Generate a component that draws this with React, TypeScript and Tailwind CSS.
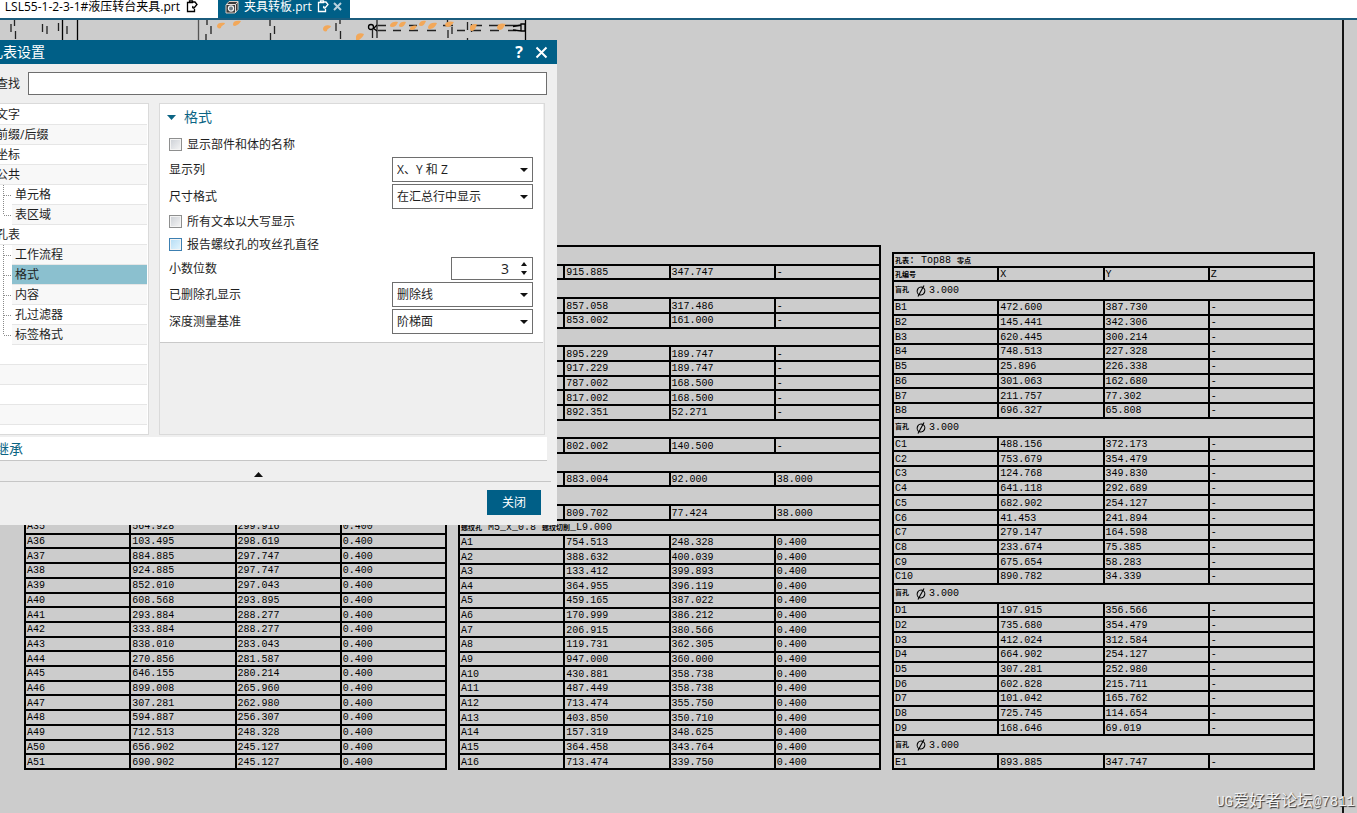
import { useState } from 'react';
import type { ReactNode } from 'react';

type TableRow = string[] | { group: ReactNode; compact?: boolean };

const NAV_ITEMS: { label: string; child?: boolean; last?: boolean }[] = [
  { label: '文字' },
  { label: '前缀/后缀' },
  { label: '坐标' },
  { label: '公共' },
  { label: '单元格', child: true },
  { label: '表区域', child: true, last: true },
  { label: '孔表' },
  { label: '工作流程', child: true },
  { label: '格式', child: true },
  { label: '内容', child: true },
  { label: '孔过滤器', child: true },
  { label: '标签格式', child: true, last: true },
];

const BLIND_3 = <BlindHole size="3.000" />;

const TABLE_LEFT: TableRow[] = [
  ['A35', '564.928', '299.916', '0.400'],
  ['A36', '103.495', '298.619', '0.400'],
  ['A37', '884.885', '297.747', '0.400'],
  ['A38', '924.885', '297.747', '0.400'],
  ['A39', '852.010', '297.043', '0.400'],
  ['A40', '608.568', '293.895', '0.400'],
  ['A41', '293.884', '288.277', '0.400'],
  ['A42', '333.884', '288.277', '0.400'],
  ['A43', '838.010', '283.043', '0.400'],
  ['A44', '270.856', '281.587', '0.400'],
  ['A45', '646.155', '280.214', '0.400'],
  ['A46', '899.008', '265.960', '0.400'],
  ['A47', '307.281', '262.980', '0.400'],
  ['A48', '594.887', '256.307', '0.400'],
  ['A49', '712.513', '248.328', '0.400'],
  ['A50', '656.902', '245.127', '0.400'],
  ['A51', '690.902', '245.127', '0.400'],
];

const TABLE_MIDDLE: TableRow[] = [
  { group: '' },
  ['', '915.885', '347.747', '-'],
  { group: '' },
  ['', '857.058', '317.486', '-'],
  ['', '853.002', '161.000', '-'],
  { group: '' },
  ['', '895.229', '189.747', '-'],
  ['', '917.229', '189.747', '-'],
  ['', '787.002', '168.500', '-'],
  ['', '817.002', '168.500', '-'],
  ['', '892.351', '52.271', '-'],
  { group: '' },
  ['', '802.002', '140.500', '-'],
  { group: '' },
  ['', '883.004', '92.000', '38.000'],
  { group: '' },
  ['', '809.702', '77.424', '38.000'],
  {
    compact: true,
    group: (
      <>
        <Han>螺纹孔</Han> M5_x_0.8 <Han>螺纹切削</Han>_L9.000
      </>
    ),
  },
  ['A1', '754.513', '248.328', '0.400'],
  ['A2', '388.632', '400.039', '0.400'],
  ['A3', '133.412', '399.893', '0.400'],
  ['A4', '364.955', '396.119', '0.400'],
  ['A5', '459.165', '387.022', '0.400'],
  ['A6', '170.999', '386.212', '0.400'],
  ['A7', '206.915', '380.566', '0.400'],
  ['A8', '119.731', '362.305', '0.400'],
  ['A9', '947.000', '360.000', '0.400'],
  ['A10', '430.881', '358.738', '0.400'],
  ['A11', '487.449', '358.738', '0.400'],
  ['A12', '713.474', '355.750', '0.400'],
  ['A13', '403.850', '350.710', '0.400'],
  ['A14', '157.319', '348.625', '0.400'],
  ['A15', '364.458', '343.764', '0.400'],
  ['A16', '713.474', '339.750', '0.400'],
];

const TABLE_RIGHT: TableRow[] = [
  { group: BLIND_3 },
  ['B1', '472.600', '387.730', '-'],
  ['B2', '145.441', '342.306', '-'],
  ['B3', '620.445', '300.214', '-'],
  ['B4', '748.513', '227.328', '-'],
  ['B5', '25.896', '226.338', '-'],
  ['B6', '301.063', '162.680', '-'],
  ['B7', '211.757', '77.302', '-'],
  ['B8', '696.327', '65.808', '-'],
  { group: BLIND_3 },
  ['C1', '488.156', '372.173', '-'],
  ['C2', '753.679', '354.479', '-'],
  ['C3', '124.768', '349.830', '-'],
  ['C4', '641.118', '292.689', '-'],
  ['C5', '682.902', '254.127', '-'],
  ['C6', '41.453', '241.894', '-'],
  ['C7', '279.147', '164.598', '-'],
  ['C8', '233.674', '75.385', '-'],
  ['C9', '675.654', '58.283', '-'],
  ['C10', '890.782', '34.339', '-'],
  { group: BLIND_3 },
  ['D1', '197.915', '356.566', '-'],
  ['D2', '735.680', '354.479', '-'],
  ['D3', '412.024', '312.584', '-'],
  ['D4', '664.902', '254.127', '-'],
  ['D5', '307.281', '252.980', '-'],
  ['D6', '602.828', '215.711', '-'],
  ['D7', '101.042', '165.762', '-'],
  ['D8', '725.745', '114.654', '-'],
  ['D9', '168.646', '69.019', '-'],
  { group: BLIND_3 },
  ['E1', '893.885', '347.747', '-'],
];

/** Small bold Chinese text inside the drawing tables */
function Han({ children }: { children: ReactNode }) {
  return <span className="text-[7px] leading-[7px] font-bold">{children}</span>;
}

function BlindHole({ size }: { size: string }) {
  return (
    <span className="flex items-center">
      <Han>盲孔</Han>
      <svg viewBox="0 0 10 12" className="mr-[3px] ml-[7px] h-3 w-[10px]" fill="none" stroke="#000" strokeWidth="1.1">
        <ellipse cx="5" cy="6" rx="3.8" ry="4" transform="rotate(20 5 6)" />
        <path d="M2 11.5 8 .5" />
      </svg>
      {size}
    </span>
  );
}

function HoleTable({ rows, className, header }: { rows: TableRow[]; className: string; header?: ReactNode }) {
  return (
    <div className="min-w-0 flex-1">
      <table
        className={`w-full table-fixed border-collapse border-2 border-black text-left font-['Liberation_Mono','Noto_Sans_CJK_SC',monospace] text-[10px] leading-[10px] whitespace-nowrap text-black ${className}`}
      >
        <colgroup>
          <col className="w-1/4" />
          <col className="w-1/4" />
          <col className="w-1/4" />
          <col className="w-1/4" />
        </colgroup>
        {header}
        <tbody>
          {rows.map((row, i) =>
            Array.isArray(row) ? (
              <tr key={i}>
                {row.map((cell, j) => (
                  <td key={j} className="border-2 border-black p-0 pt-0.5 pl-px">
                    {cell}
                  </td>
                ))}
              </tr>
            ) : (
              <tr key={i}>
                <td
                  colSpan={4}
                  className={`border-2 border-black p-0 pl-px ${row.compact ? 'pt-0.5' : 'pt-px leading-[15px]'}`}
                >
                  {row.group || <>&nbsp;</>}
                </td>
              </tr>
            )
          )}
        </tbody>
      </table>
    </div>
  );
}

/** Upper edge of the part view that shows above the dialog */
function PartSketch() {
  return (
    <svg viewBox="0 20 600 20" className="block h-5 w-[600px]" fill="none" stroke="#222" strokeWidth="1.3">
      <path d="M11 24v8M14.500 20v6M15.500 31v8M42.500 24v8M47 26v8M58.500 23v8M67 26v8M207 20v5M206 34v6M211 26v8M270 20v6M270.500 33v7M274.500 26v8M336 23v8M340 20v4M340.500 31v8" />
      <path d="M62.500 20v20M77.500 20v20" stroke="#000" />
      <path d="M198.500 20v20" stroke="#555" />
      <path d="M378 25.500h8M378 30.500h8M393 30.500h8M409 25.500h8M409 30.500h9M427 30.500h9M443 25.500h10M457 30.500h8M471 30.500h10M489 25.500h10M473 25.500h9M490 30.500h9M505 25.500h16M508 30.500h8" />
      <path d="M377 20v18M372.500 30v8M447.500 20v4M448 30v8M452 27v7M467.500 22v8M467.500 38v2M471.500 24v8" />
      <path d="M525.500 20v20M513 26.500l8-1.500v6l-8-1M521 24h4v7h-4z" stroke="#000" />
      <circle cx="371" cy="27" r="2.500" stroke="#000" />
      <path d="M373 29l4-4M373 28l4 3" stroke="#000" />
      <g fill="#f2a85a" stroke="none">
        <path d="M217 26c0-3 4-4 8-3-1 3-4 2-4 5-2 1-4 0-4-2zM233 24c0-3 4-4 8-3-1 2-3 4-6 5-2 0-2-1-2-2zM323 29c0-3 4-5 8-3-1 3-4 2-4 5-2 1-4 0-4-2zM356 37c0-3 4-5 8-3-1 3-3 4-5 6h-3z" />
        <path d="M390 25c1-3 5-4 8-3-1 3-3 5-6 5-2 0-2-1-2-2zM399 25c1-3 4-4 7-3-1 3-3 5-5 5-2 0-2-1-2-2zM410 28c1-2 4-3 7-2-1 2-3 4-5 4s-2-1-2-2zM419 24c1-3 4-4 7-3-1 3-3 5-5 5-2 0-2-1-2-2zM428 27c1-4 5-5 9-4-1 3-4 6-7 6-2 0-2-1-2-2zM445 24c2-3 6-3 9-2-2 2-3 5-6 5-2 0-3-1-3-3zM470 27c1-3 4-3 7-3-1 3-2 7-5 7-2 0-2-2-2-4zM497 27c1-4 5-4 9-3-2 2-3 6-6 6-2 0-3-1-3-3z" />
      </g>
    </svg>
  );
}

function EditDocIcon() {
  return (
    <svg viewBox="0 0 12 13" className="h-[13px] w-3 shrink-0" fill="none" stroke="currentColor" strokeWidth="1.300">
      <path d="M7 2.500H1.500v9h7V9M3.500 2V.8h3V2" />
      <path d="M6.500 2h2.500l2 2.500-3 3.500" />
      <path d="M6.500 8l.5-2M6.500 8h2" />
    </svg>
  );
}

function PartIcon() {
  return (
    <svg viewBox="0 0 14 14" className="size-[14px]">
      <path d="M1 5 4 1.500h9v8L10 13H1z" fill="#3a3a3a" stroke="#d8c9c0" />
      <path d="M1.500 4.500h9V13M10.500 4.500 13 1.800" fill="none" stroke="#e6e1dd" />
      <circle cx="6" cy="8.500" r="2.600" fill="#6c7b84" stroke="#f4f4f4" strokeWidth="1.200" />
    </svg>
  );
}

function TabBar() {
  return (
    <nav className="flex h-5 items-start border-b-2 border-[#1b5c7d] bg-white text-xs leading-3">
      <button type="button" className="flex h-[13px] items-center gap-1.5 whitespace-nowrap">
        <span className="w-[180px] text-right">LSL55-1-2-3-1#液压转台夹具.prt</span>
        <EditDocIcon />
      </button>
      <div className="ml-5 flex h-[18px] w-[132px] items-start gap-1 bg-[#005f87] pl-[7px] text-white">
        <button type="button" className="flex h-[13px] items-center gap-[5px] whitespace-nowrap">
          <PartIcon />
          夹具转板.prt
          <EditDocIcon />
        </button>
        <button type="button" aria-label="关闭标签" className="flex h-[13px] items-center text-[#b9d2de]">
          <svg viewBox="0 0 9 9" className="size-[9px]" stroke="currentColor" strokeWidth="2">
            <path d="M1 1l7 7M8 1 1 8" />
          </svg>
        </button>
      </div>
    </nav>
  );
}

function SelectRow({ id, label, options }: { id: string; label: string; options: string[] }) {
  return (
    <div className="flex items-center justify-between">
      <label htmlFor={id}>{label}</label>
      <div className="relative">
        <select
          id={id}
          className="h-[25px] w-[141px] appearance-none border border-[#6e6e6e] bg-white pl-1 text-xs outline-none"
        >
          {options.map((option) => (
            <option key={option}>{option}</option>
          ))}
        </select>
        <svg viewBox="0 0 8 4" className="pointer-events-none absolute top-[11px] right-[5px] h-1 w-2">
          <path d="M0 0h8L4 4z" fill="#111" />
        </svg>
      </div>
    </div>
  );
}

function CheckRow({ label, hot = false }: { label: string; hot?: boolean }) {
  return (
    <label className="flex h-[21px] items-center gap-[5px]">
      <input
        type="checkbox"
        className={`size-[13px] appearance-none border bg-linear-to-br shadow-[inset_0_0_0_1px_#f4f4f4] checked:bg-[#005f87] ${
          hot ? 'border-[#3c7fb1] from-[#b3dcf5] to-[#e6f6fd]' : 'border-[#8e8f8f] from-[#cbcfd5] to-[#f6f6f6]'
        }`}
      />
      {label}
    </label>
  );
}

function NavTree() {
  const [selected, setSelected] = useState('格式');

  return (
    <ul className="w-[161px] overflow-hidden border border-[#dadada] bg-white pt-px pr-px">
      {NAV_ITEMS.map(({ label, child, last }, i) => (
        <li key={label} className={`flex h-5 ${child ? 'pl-[13px]' : ''}`}>
          {child && (
            <svg viewBox="0 0 10 20" className="h-5 w-[10px]" stroke="#8a8a8a" strokeDasharray="1 1">
              <path d={last ? 'M1.500 0v10' : 'M1.500 0v20'} />
              <path d="M2 10.500h8" />
            </svg>
          )}
          <button
            type="button"
            onClick={() => setSelected(label)}
            className={`flex-1 border-b border-[#e6e6e6] text-left whitespace-nowrap ${child ? 'pl-[3px]' : 'pl-[7px]'} ${
              child && selected === label ? 'bg-[#8bc0cf]' : i % 2 ? 'bg-[#f8f8f8]' : 'bg-white'
            }`}
          >
            {label}
          </button>
        </li>
      ))}
      {[0, 1, 2, 3].map((i) => (
        <li key={i} className={`h-5 border-b border-[#e6e6e6] ${i % 2 ? 'bg-[#f8f8f8]' : 'bg-white'}`} />
      ))}
    </ul>
  );
}

function FormatPanel() {
  const [digits, setDigits] = useState(3);

  return (
    <section className="flex-1 border border-[#dadada] pr-px">
      <div className="flex flex-col gap-0.5 border-b border-[#c9c9c9] bg-white pr-[10px] pb-2 pl-[9px]">
        <h2 className="-ml-0.5 flex h-7 items-center gap-2 pb-0.5 text-sm text-[#0b6484]">
          <svg viewBox="0 0 9 5" className="h-[5px] w-[9px]">
            <path d="M0 0h9L4.500 5z" fill="#0b6484" />
          </svg>
          格式
        </h2>
        <CheckRow label="显示部件和体的名称" />
        <SelectRow id="columns" label="显示列" options={['X、Y 和 Z', 'X 和 Y']} />
        <SelectRow id="size-format" label="尺寸格式" options={['在汇总行中显示', '在列中显示']} />
        <CheckRow label="所有文本以大写显示" />
        <CheckRow label="报告螺纹孔的攻丝孔直径" hot />
        <div className="flex items-center justify-between">
          <label htmlFor="digits">小数位数</label>
          <div className="flex h-[23px] w-[82px] items-center border border-[#6e6e6e] bg-white pr-[5px]">
            <input
              id="digits"
              inputMode="numeric"
              value={digits}
              onChange={(e) => setDigits(Number(e.target.value) || 0)}
              className="h-full w-full min-w-0 pr-3 text-right text-sm outline-none"
            />
            <div className="flex flex-col gap-[5px]">
              <button type="button" aria-label="增加" onClick={() => setDigits(digits + 1)}>
                <svg viewBox="0 0 6 4" className="block h-1 w-1.5">
                  <path d="M0 4h6L3 0z" fill="#111" />
                </svg>
              </button>
              <button type="button" aria-label="减少" onClick={() => setDigits(Math.max(0, digits - 1))}>
                <svg viewBox="0 0 6 4" className="block h-1 w-1.5">
                  <path d="M0 0h6L3 4z" fill="#111" />
                </svg>
              </button>
            </div>
          </div>
        </div>
        <SelectRow id="deleted" label="已删除孔显示" options={['删除线', '隐藏']} />
        <SelectRow id="depth" label="深度测量基准" options={['阶梯面', '顶面']} />
      </div>
    </section>
  );
}

function SettingsDialog() {
  return (
    <div
      role="dialog"
      aria-label="孔表设置"
      className="absolute top-10 -left-3 w-[569px] bg-[#efefef] pb-[10px] text-xs text-[#1e1e1e]"
    >
      <header className="flex h-6 items-center bg-[#005f87] pr-[9px] pl-px text-sm text-white">
        <h1 className="flex-1">孔表设置</h1>
        <button type="button" aria-label="帮助" className="mr-3 font-['Open_Sans',sans-serif] text-base font-bold">
          ?
        </button>
        <button type="button" aria-label="关闭窗口">
          <svg viewBox="0 0 13 13" className="size-[13px]" stroke="#fff" strokeWidth="2">
            <path d="M1.500 1.500l10 10M11.500 1.500l-10 10" />
          </svg>
        </button>
      </header>

      <div className="flex items-center gap-2 pt-2 pr-[10px] pb-2 pl-2">
        <label htmlFor="search">查找</label>
        <input id="search" className="h-[23px] min-w-0 flex-1 border border-[#6e6e6e] bg-white px-1 outline-none" />
      </div>

      <div className="flex h-[332px] gap-[10px] pr-3">
        <NavTree />
        <FormatPanel />
      </div>

      <div className="mt-0.5 mr-[10px] border-b border-[#c6c6c6] bg-white pl-[7px]">
        <button type="button" className="flex h-[23px] items-center text-sm text-[#0b6484]">
          继承
        </button>
      </div>

      <div className="mr-1.5 flex h-[21px] items-center justify-center border-b border-[#c6c6c6] pt-1.5 pr-[22px]">
        <button type="button" aria-label="收起">
          <svg viewBox="0 0 9 5" className="block h-[5px] w-[9px]">
            <path d="M0 5h9L4.500 0z" fill="#111" />
          </svg>
        </button>
      </div>

      <div className="flex justify-end pt-2 pr-4">
        <button type="button" className="h-[25px] w-[54px] bg-[#005f87] text-white">
          关闭
        </button>
      </div>
    </div>
  );
}

export default function App() {
  return (
    <div className="relative flex min-h-screen flex-col overflow-hidden bg-[#cccccc] font-['Open_Sans','Noto_Sans_CJK_SC',sans-serif]">
      <TabBar />

      <main className="mr-[13px] flex flex-1 flex-col justify-between border-r-2 border-[#141414] pr-[27px] pb-[43px] pl-6">
        <div className="-ml-6">
          <PartSketch />
        </div>
        <div className="flex items-end gap-[11px]">
          <HoleTable rows={TABLE_LEFT} className="h-[252px]" />
          <HoleTable rows={TABLE_MIDDLE} className="h-[525px]" />
          <HoleTable
            rows={TABLE_RIGHT}
            className="h-[518px]"
            header={
              <thead>
                <tr>
                  <th colSpan={4} className="border-2 border-black p-0 pt-0.5 pl-px font-normal">
                    <Han>孔表</Han>: Top88 <Han>零点</Han>
                  </th>
                </tr>
                <tr>
                  <th className="border-2 border-black p-0 pt-0.5 pl-px">
                    <Han>孔编号</Han>
                  </th>
                  <th className="border-2 border-black p-0 pt-0.5 pl-px font-normal">X</th>
                  <th className="border-2 border-black p-0 pt-0.5 pl-px font-normal">Y</th>
                  <th className="border-2 border-black p-0 pt-0.5 pl-px font-normal">Z</th>
                </tr>
              </thead>
            }
          />
        </div>
      </main>

      <SettingsDialog />

      <p className="absolute right-0.5 bottom-px font-['Liberation_Mono','Noto_Sans_CJK_SC',monospace] text-base leading-5 whitespace-nowrap text-[#f2f2f2] [text-shadow:1px_1px_1px_#333]">
        <span className="text-sm">UG</span>爱好者论坛<span className="text-sm">@7811</span>
      </p>
    </div>
  );
}
